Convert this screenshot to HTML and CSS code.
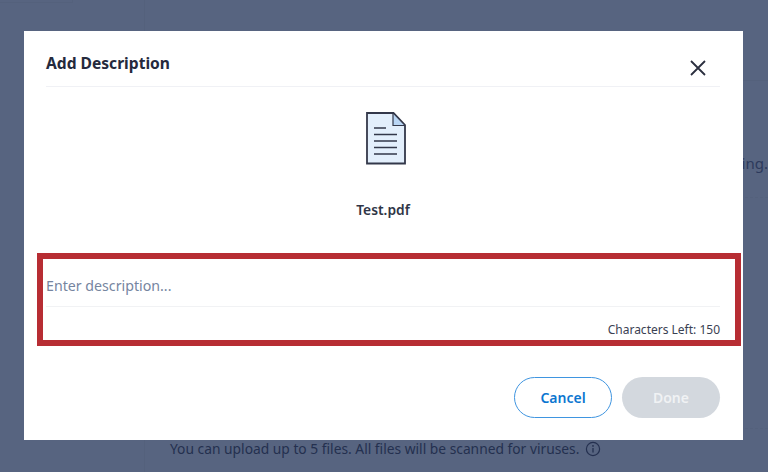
FILE: index.html
```html
<!DOCTYPE html>
<html>
<head>
    <title>Add Description</title>
    <link rel="stylesheet" href="styles.css">
</head>
<body>
    <div class="page">
        <div class="top-card"></div>
        <div class="side-col"></div>
        <div class="main-col">
            <div class="row-line row-first"></div>
            <div class="row-text">Files are checked before sending.</div>
            <div class="row-line row-dashed"></div>
            <div class="row-line row-dashed row-last"></div>
            <div class="upload-note">
                You can upload up to 5 files. All files will be scanned for viruses.
                <svg class="info-icon" width="16" height="16" viewBox="0 0 16 16">
                    <circle cx="8" cy="8" r="6.6" fill="none" stroke="#24304f" stroke-width="1.2"/>
                    <path d="M8 7v4.4" stroke="#24304f" stroke-width="1.3" fill="none"/>
                    <circle cx="8" cy="4.9" r="0.9" fill="#24304f"/>
                </svg>
            </div>
        </div>
    </div>

    <div class="overlay">
        <div class="modal">
            <div class="modal-header">
                <h1>Add Description</h1>
                <button class="close-btn" aria-label="Close">
                    <svg width="16" height="16" viewBox="0 0 16 16">
                        <path d="M1 1l14 14M15 1L1 15" stroke="#2b2f3f" stroke-width="1.8" fill="none"/>
                    </svg>
                </button>
            </div>

            <div class="file-preview">
                <svg class="file-icon" width="42" height="54" viewBox="0 0 42 54">
                    <path d="M3 1.500h25l12 12v38H3z" fill="#e3effc"/>
                    <path d="M28 1.500l12 12H28z" fill="#b9d6f5"/>
                    <path d="M2 1h26.500L40 13v38.500H2z" fill="none" stroke="#33384a" stroke-width="1.800"/>
                    <path d="M28 1v12.500h12" fill="none" stroke="#33384a" stroke-width="1.200"/>
                    <path d="M9 16h12M9 22.500h23M9 29h23M9 35.500h23M9 42h23" stroke="#33384a" stroke-width="1.700" fill="none"/>
                </svg>
                <div class="file-name">Test.pdf</div>
            </div>

            <div class="description">
                <input class="description-input" type="text" placeholder="Enter description...">
                <div class="char-count">Characters Left: 150</div>
            </div>

            <div class="highlight-box"></div>

            <div class="modal-actions">
                <button class="btn btn-cancel">Cancel</button>
                <button class="btn btn-done">Done</button>
            </div>
        </div>
    </div>
</body>
</html>
```

FILE: styles.css
```css
* {
    box-sizing: border-box;
}

body {
    margin: 0;
    height: 472px;
    overflow: hidden;
    font-family: "Noto Sans", Arial, sans-serif;
    background-color: #576480;
    color: #24304f;
}

/* Dimmed page behind the dialog */
.page {
    display: flex;
    height: 472px;
}

.top-card {
    position: absolute;
    top: 0;
    left: 0;
    width: 73px;
    height: 3px;
    border-right: 1px solid #54617c;
    border-bottom: 1px solid #54617c;
}

.side-col {
    width: 145px;
    border-right: 1px solid #54617c;
}

.main-col {
    flex: 1;
    padding-left: 25px;
    display: flex;
    flex-direction: column;
}

.row-line {
    border-top: 1px solid #54617c;
}

.row-first {
    margin-top: 80px;
}

.row-text {
    margin-top: 72px;
    font-size: 15px;
    line-height: 20px;
    white-space: nowrap;
    text-align: right;
    color: #2d3a5c;
}

.row-dashed {
    margin-top: 24px;
    border-top-style: dashed;
}

.row-last {
    margin-top: 230px;
}

.upload-note {
    margin-top: 10px;
    font-size: 13.800px;
    line-height: 20px;
    display: flex;
    align-items: center;
    gap: 6px;
    white-space: nowrap;
}

.overlay {
    position: absolute;
    top: 0;
    left: 0;
    width: 768px;
    height: 472px;
    display: flex;
    align-items: flex-start;
    justify-content: flex-start;
    padding: 31px 0 0 24px;
}

.modal {
    position: relative;
    width: 719px;
    height: 409px;
    padding: 0 23px 0 22px;
    background-color: white;
    display: flex;
    flex-direction: column;
}

.modal-header {
    height: 56px;
    border-bottom: 1px solid #f0f1f5;
    display: flex;
    justify-content: space-between;
}

.modal-header h1 {
    margin: 21px 0 0;
    font-size: 15.600px;
    line-height: 23px;
    font-weight: 700;
    color: #252a3d;
}

.close-btn {
    width: 16px;
    height: 16px;
    margin: 29px 14px 0 0;
    padding: 0;
    background: none;
    border: none;
    display: flex;
}

.file-preview {
    display: flex;
    flex-direction: column;
    align-items: center;
}

.file-icon {
    margin-top: 25px;
    margin-left: 6px;
}

.file-name {
    margin-top: 34px;
    font-size: 13.800px;
    line-height: 20px;
    font-weight: 600;
    color: #2f3546;
}

.description {
    margin-top: 45px;
    display: flex;
    flex-direction: column;
}

.description-input {
    height: 42px;
    padding: 0;
    border: none;
    border-bottom: 1px solid #f1f2f4;
    outline: none;
    font-family: inherit;
    font-size: 14.200px;
}

.description-input::placeholder {
    color: #76859f;
    opacity: 1;
}

.char-count {
    margin-top: 14px;
    font-size: 12px;
    line-height: 18px;
    text-align: right;
    color: #3a4152;
}

/* Red annotation drawn over the field */
.highlight-box {
    position: absolute;
    left: 13px;
    top: 222px;
    width: 704px;
    height: 93px;
    border: 6px solid #b72d33;
}

.modal-actions {
    margin-top: 38px;
    display: flex;
    justify-content: flex-end;
    gap: 10px;
}

.btn {
    width: 98px;
    height: 41px;
    border-radius: 21px;
    font-family: inherit;
    font-size: 14px;
    font-weight: 600;
}

.btn-cancel {
    background-color: white;
    border: 1.500px solid #3f95e0;
    color: #0b76d0;
}

.btn-done {
    background-color: #d3d8de;
    border: none;
    color: #f0f2f4;
}
```
